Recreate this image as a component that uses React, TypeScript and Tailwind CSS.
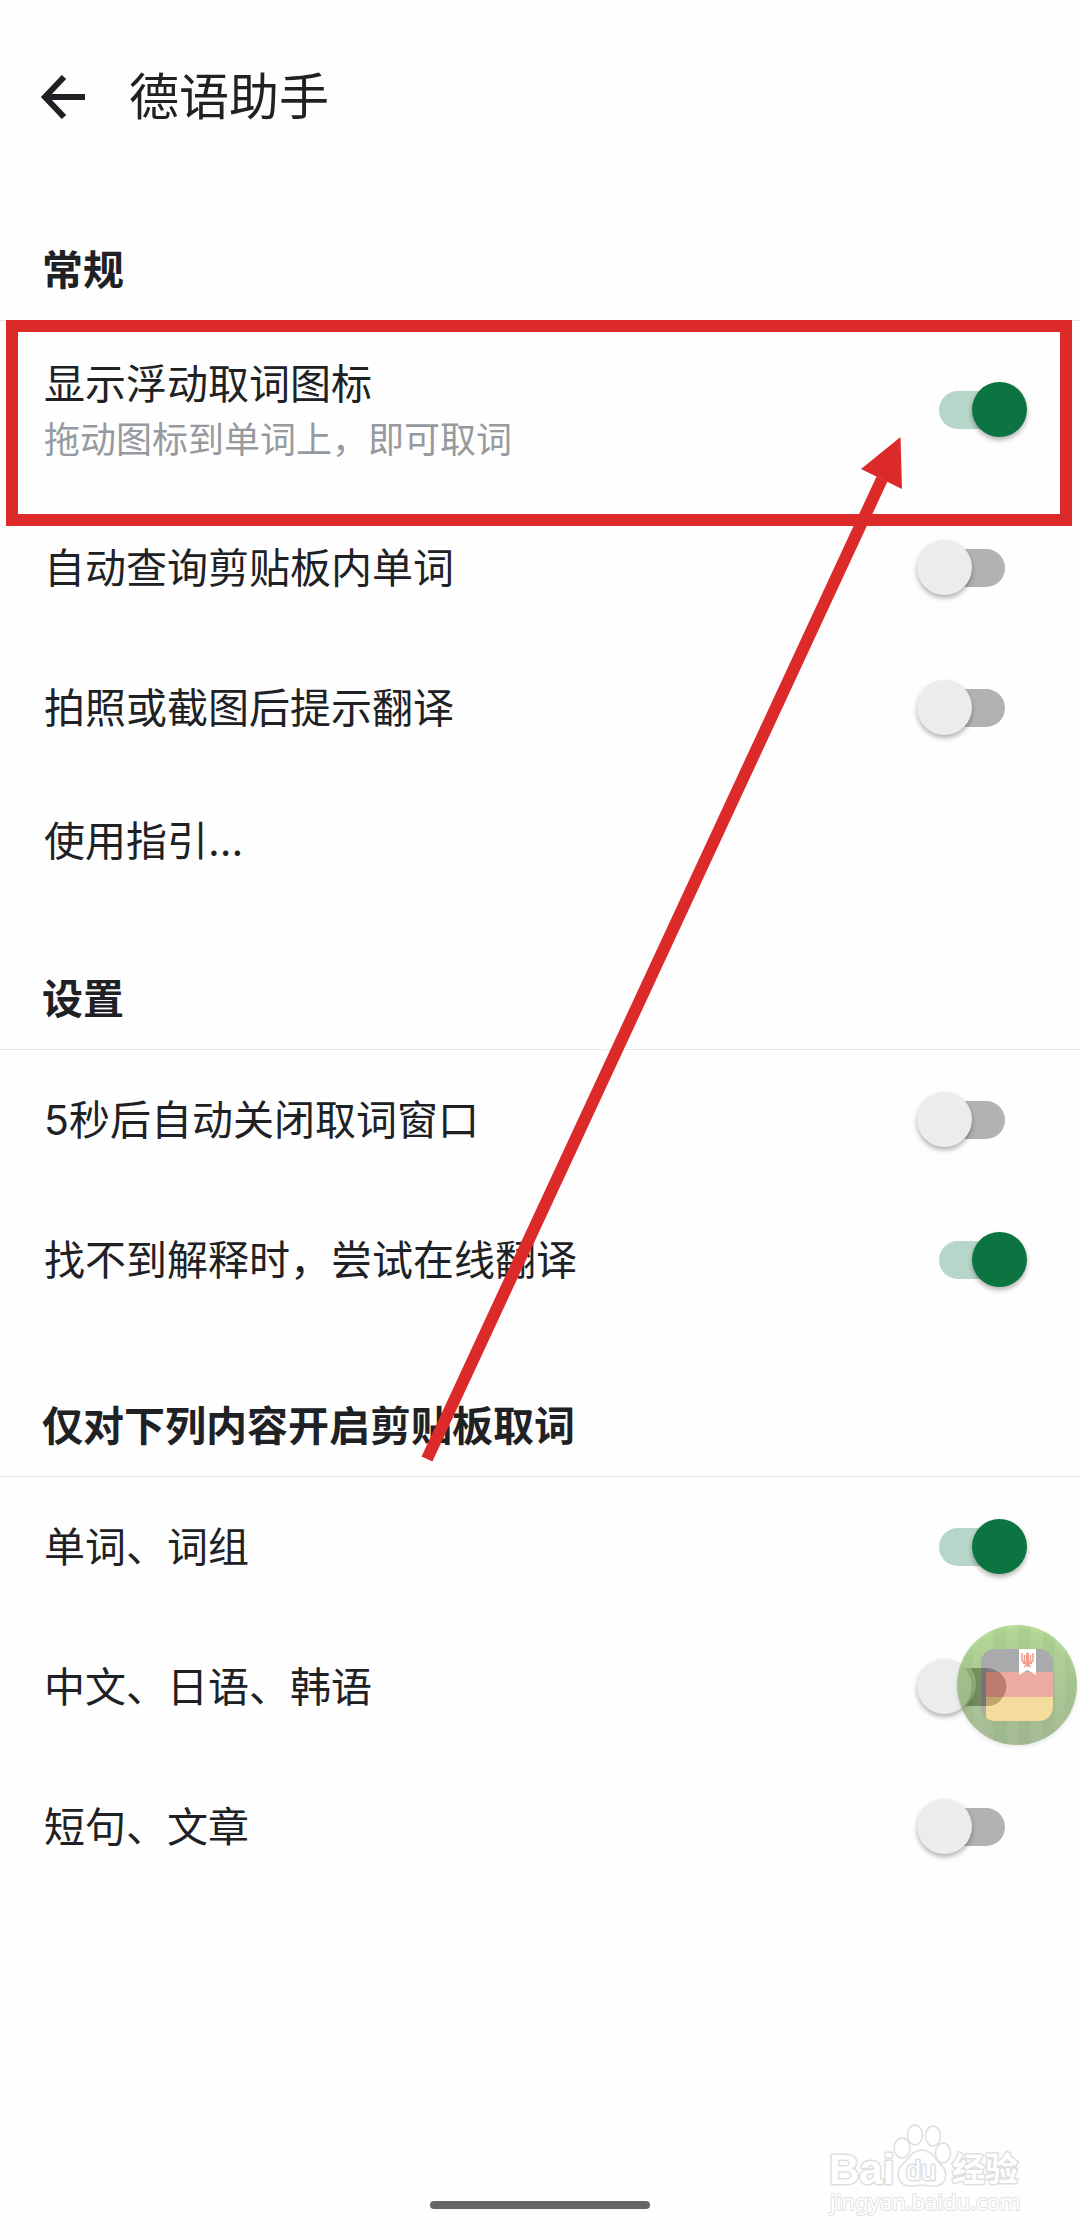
import { useState } from "react";

type Item = { id: string; label: string; summary?: string; on?: boolean; marked?: boolean };

const general: Item[] = [
  { id: "float", label: "显示浮动取词图标", summary: "拖动图标到单词上，即可取词", on: true, marked: true },
  { id: "clipboard", label: "自动查询剪贴板内单词" },
  { id: "photo", label: "拍照或截图后提示翻译" },
];

const settings: Item[] = [
  { id: "autoclose", label: "5秒后自动关闭取词窗口" },
  { id: "online", label: "找不到解释时，尝试在线翻译", on: true },
];

const content: Item[] = [
  { id: "words", label: "单词、词组", on: true },
  { id: "cjk", label: "中文、日语、韩语" },
  { id: "sentences", label: "短句、文章" },
];

function SectionTitle({ children }: { children: string }) {
  return (
    <h2 className="flex h-[147px] items-end border-b border-[#e6e6e6] px-[42px] pb-5 text-[41px] leading-[60px] font-bold">
      {children}
    </h2>
  );
}

function SwitchRow({ item }: { item: Item }) {
  const [on, setOn] = useState(Boolean(item.on));
  return (
    <label
      htmlFor={item.id}
      className={`relative flex items-center justify-between pr-[75px] pl-11 ${item.summary ? "h-[177px]" : "h-[140px]"}`}
    >
      <span className="flex flex-col">
        <span className="text-[41px] leading-[60px]">{item.label}</span>
        {item.summary && <span className="text-4xl leading-[52px] text-[#969a9e]">{item.summary}</span>}
      </span>
      <input
        id={item.id}
        type="checkbox"
        role="switch"
        checked={on}
        onChange={(e) => setOn(e.target.checked)}
        className="relative h-[38px] w-[66px] shrink-0 appearance-none rounded-full bg-[#b2b2b2] before:absolute before:-top-[9px] before:-left-[22px] before:size-[55px] before:rounded-full before:bg-[#ececec] before:shadow-[0_3px_5px_rgba(0,0,0,0.3)] checked:bg-[#b5d6c8] checked:before:left-[33px] checked:before:bg-[#0c7441]"
      />
      {item.marked && (
        <span className="pointer-events-none absolute -top-px right-2 -bottom-7 left-1.5 border-12 border-[#dc2a2a]" />
      )}
    </label>
  );
}

function FloatingIcon() {
  return (
    <svg viewBox="0 0 120 120" className="size-[120px] overflow-visible drop-shadow-[0_2px_2px_rgba(0,0,0,0.15)]" aria-hidden="true">
      <defs>
        <linearGradient id="disc" x1="0" y1="0" x2="0" y2="1">
          <stop offset="0" stopColor="#8fcb5c" stopOpacity="0.6" />
          <stop offset="1" stopColor="#789a60" stopOpacity="0.6" />
        </linearGradient>
        <linearGradient id="track" x1="0" y1="0" x2="1" y2="0">
          <stop offset="0" stopColor="#3f4f28" stopOpacity="0.45" />
          <stop offset="1" stopColor="#3f4f28" stopOpacity="0.25" />
        </linearGradient>
        <clipPath id="discClip">
          <circle cx="60" cy="60" r="60" />
        </clipPath>
        <clipPath id="tile">
          <rect x="24" y="24" width="72" height="72" rx="14" />
        </clipPath>
      </defs>
      <circle cx="60" cy="60" r="60" fill="url(#disc)" />
      <g clipPath="url(#discClip)" fill="#5d8a45" opacity="0.08">
        <rect x="-1" y="0" width="17" height="120" />
        <rect x="36" y="0" width="14" height="120" />
        <rect x="61" y="0" width="13" height="120" />
        <rect x="86" y="0" width="12" height="120" />
        <rect x="108" y="0" width="12" height="120" />
      </g>
      <path d="M14 43H28V81H9A29 29 0 0 0 14 43Z" fill="url(#track)" />
      <g clipPath="url(#tile)">
        <rect x="24" y="24" width="72" height="72" fill="#aaaaac" />
        <rect x="24" y="43" width="5" height="38" fill="#757575" />
        <rect x="29" y="47" width="67" height="25" fill="#ebaaa2" />
        <rect x="29" y="72" width="67" height="24" fill="#f4dd9c" />
        <path d="M29 47H42A18 18 0 0 1 46 72H29Z" fill="#bd7c70" />
        <path d="M29 72H46A18 18 0 0 1 30 81H29Z" fill="#bfa66c" />
        <path d="M29 43H31A18 18 0 0 1 41 47H29Z" fill="#7d7d7d" />
      </g>
      <path d="M62 24H79V50L70.500 45L62 50Z" fill="#fff" />
      <g fill="none" stroke="#ee9d8c" strokeWidth="1.500">
        <path d="M65 28V36M67.500 30V38M76 28V36M73.500 30V38" />
        <path d="M65 36L70.500 39L76 36M66 38.500H75M67 42L70.500 39L74 42" />
      </g>
      <path d="M70 27L72 28.500V40L70.500 43L69 40V30Z" fill="#ee9d8c" />
    </svg>
  );
}

function Watermark() {
  return (
    <svg viewBox="0 0 200 100" className="h-[100px] w-[200px]" role="img" aria-label="Baidu 经验 jingyan.baidu.com">
      <g fill="#fff" stroke="#dedede" strokeWidth="1.500">
        <ellipse cx="75" cy="28" rx="8" ry="10" />
        <ellipse cx="88" cy="15" rx="7.500" ry="10" />
        <ellipse cx="106" cy="16" rx="7.500" ry="10" />
        <ellipse cx="116" cy="33" rx="7.500" ry="10" />
        <path d="M95 30C85 30 82 39 76 44C68 51 70 66 83 66C88 66 91 65 95 65C99 65 102 66 107 66C120 66 122 52 114 45C108 39 105 30 95 30Z" />
      </g>
      <g fill="#fff" stroke="#dedede" strokeWidth="3" paintOrder="stroke" strokeLinejoin="round">
        <text x="2" y="64" fontFamily="'Liberation Sans', sans-serif" fontWeight="700" fontSize="42">Bai</text>
        <text x="79" y="60" fontFamily="'Liberation Sans', sans-serif" fontWeight="400" fontSize="27">du</text>
        <text x="125" y="61" fontFamily="'Noto Sans CJK SC', sans-serif" fontWeight="700" fontSize="33">经验</text>
      </g>
      <g fill="#fff" stroke="#e2e2e2" strokeWidth="2" paintOrder="stroke" strokeLinejoin="round">
        <text x="3" y="90" fontFamily="'Noto Sans', sans-serif" fontWeight="400" fontSize="22">jingyan.baidu.com</text>
      </g>
    </svg>
  );
}

export default function App() {
  return (
    <div className="relative flex min-h-screen flex-col overflow-hidden bg-[#fefefe] font-['Inter','Noto_Sans_CJK_SC',sans-serif] text-[#202124]">
      <header className="flex h-[174px] items-start gap-11 px-10 pt-[67px]">
        <button type="button" aria-label="返回" className="flex h-[60px] items-center">
          <svg viewBox="0 0 45 44" className="h-11 w-[45px]" fill="none" stroke="#202124" strokeWidth="6">
            <path d="M45 22H5M24 2L5 22L24 42" />
          </svg>
        </button>
        <h1 className="text-[50px] leading-[60px]">德语助手</h1>
      </header>

      <main className="flex-1">
        <section>
          <SectionTitle>常规</SectionTitle>
          {general.map((item) => (
            <SwitchRow key={item.id} item={item} />
          ))}
          <button type="button" className="flex h-[125px] w-full items-center px-11 text-left text-[41px] leading-[60px]">
            使用指引...
          </button>
        </section>
        <section>
          <SectionTitle>设置</SectionTitle>
          {settings.map((item) => (
            <SwitchRow key={item.id} item={item} />
          ))}
        </section>
        <section>
          <SectionTitle>仅对下列内容开启剪贴板取词</SectionTitle>
          {content.map((item) => (
            <SwitchRow key={item.id} item={item} />
          ))}
        </section>
      </main>

      <footer className="flex justify-center pb-[31px]">
        <span className="h-2 w-[220px] rounded-full bg-[#666]" />
      </footer>

      <div className="absolute top-[1625px] right-[3px]">
        <FloatingIcon />
      </div>
      <div className="absolute right-[53px] bottom-5">
        <Watermark />
      </div>
      <svg viewBox="0 0 482 1026" className="pointer-events-none absolute top-[436px] right-[177px] h-[1026px] w-[482px]" aria-hidden="true">
        <path d="M6 1023L461 43" stroke="#dc2a2a" strokeWidth="12" />
        <path d="M479.500 1L440 33L481 53Z" fill="#dc2a2a" />
      </svg>
    </div>
  );
}
